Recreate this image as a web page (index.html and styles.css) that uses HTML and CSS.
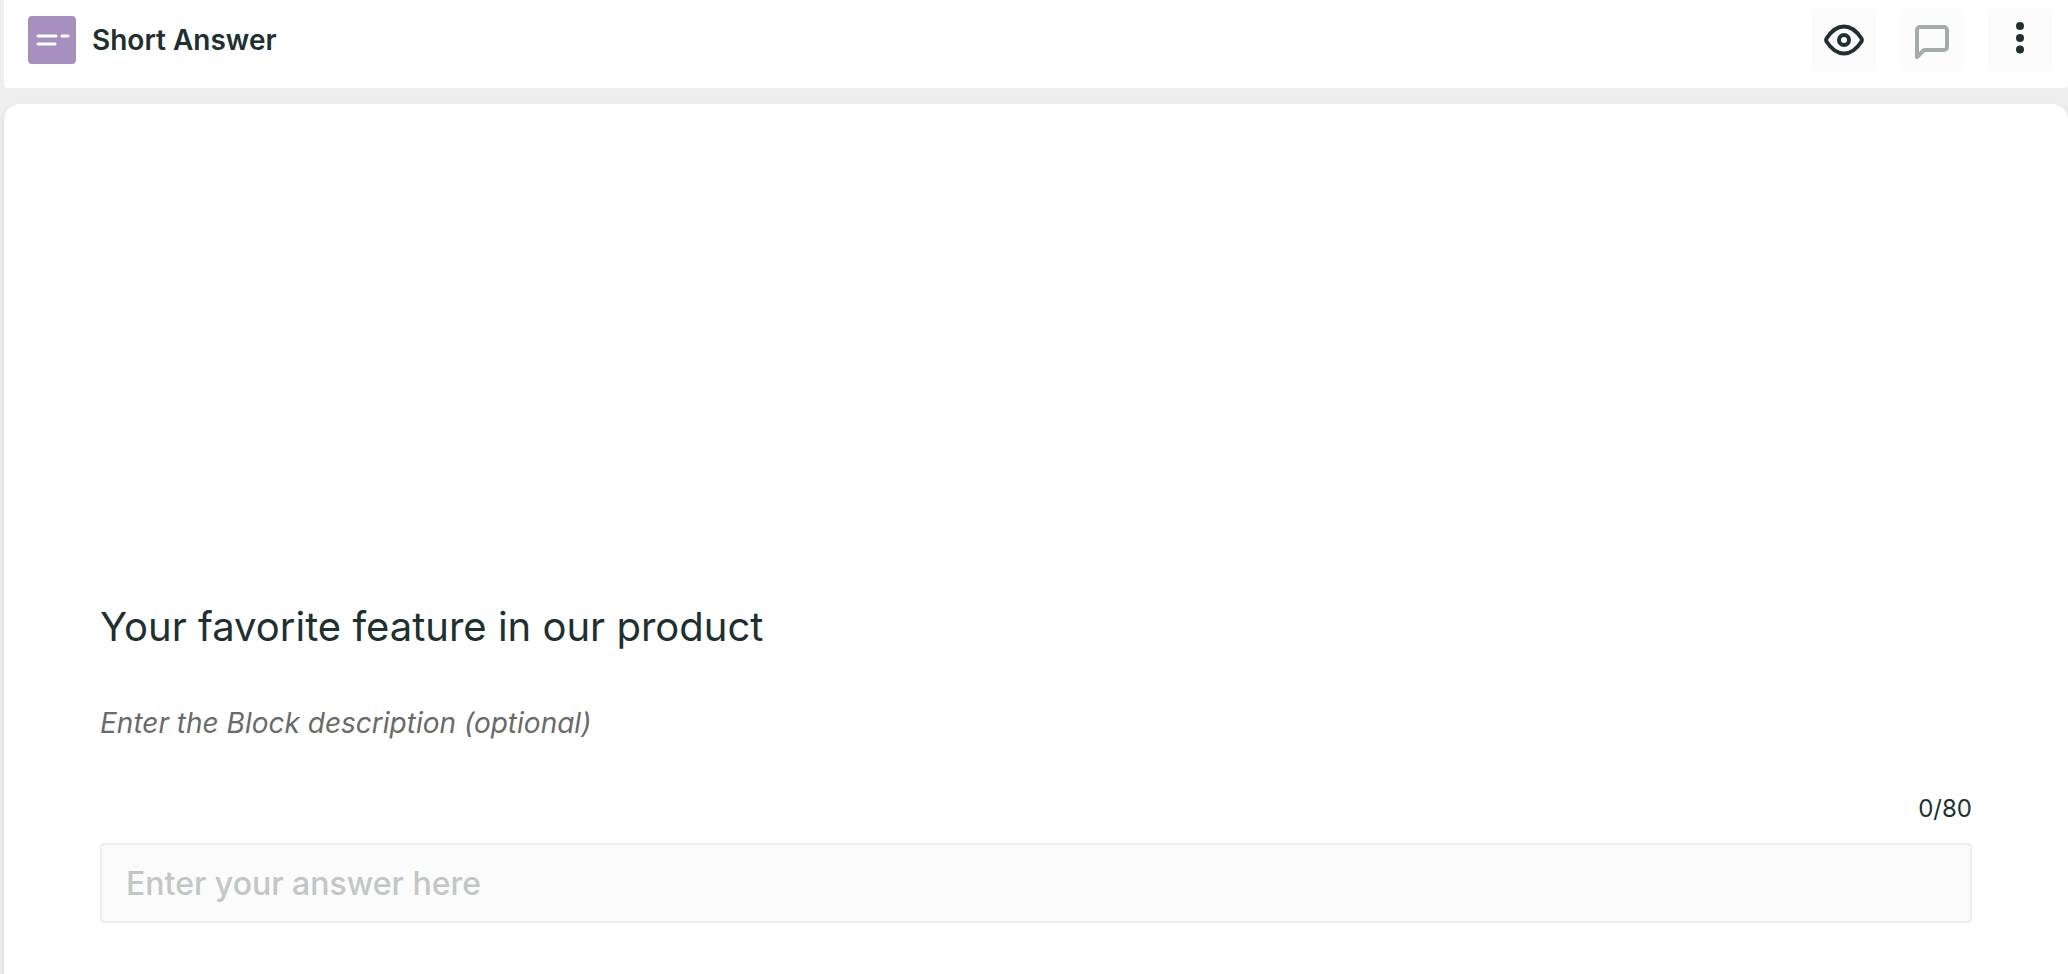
FILE: index.html
```
<!DOCTYPE html>
<html lang="en">
<head>
<meta charset="utf-8">
<title>Short Answer</title>
<link rel="stylesheet" href="styles.css">
</head>
<body>
<header class="toolbar">
  <svg class="block-icon" viewBox="0 0 48 48" aria-hidden="true">
    <rect width="48" height="48" rx="4" fill="#a78fbf"/>
    <path d="M10 20H28M34 20H40M10 28H27" stroke="#fff" stroke-width="3" stroke-linecap="round"/>
  </svg>
  <h1 class="block-name">Short Answer</h1>
  <div class="actions">
    <button class="action" type="button" aria-label="Preview">
      <svg viewBox="0 0 64 64" fill="none" stroke="currentColor" stroke-width="4" stroke-linejoin="round">
        <path d="M14.500 30.500C19 23.500 25 18.500 32 18.500S45 23.500 49.500 30.500Q50.500 32 49.500 33.500C45 40.500 39 45.500 32 45.500S19 40.500 14.500 33.500Q13.500 32 14.500 30.500Z"/>
        <circle cx="32" cy="32" r="5"/>
      </svg>
    </button>
    <button class="action" type="button" aria-label="Comments" disabled>
      <svg viewBox="0 0 64 64" fill="none" stroke="currentColor" stroke-width="4" stroke-linejoin="round">
        <path d="M17 49V22a3 3 0 0 1 3-3H44a3 3 0 0 1 3 3V39a3 3 0 0 1-3 3H24Z"/>
      </svg>
    </button>
    <button class="action" type="button" aria-label="More options">
      <svg viewBox="0 0 64 64" fill="currentColor">
        <circle cx="32" cy="18" r="4"/><circle cx="32" cy="30" r="4"/><circle cx="32" cy="41.500" r="4"/>
      </svg>
    </button>
  </div>
</header>
<main class="panel">
  <h2 class="question">Your favorite feature in our product</h2>
  <p class="description">Enter the Block description (optional)</p>
  <p class="counter" id="count">0/80</p>
  <input class="answer" type="text" maxlength="80" placeholder="Enter your answer here" aria-label="Your answer" aria-describedby="count">
</main>
</body>
</html>
```
FILE: styles.css
```
* {
  box-sizing: border-box;
}

body {
  display: flex;
  flex-direction: column;
  gap: 16px;
  min-height: 100vh;
  margin: 0;
  padding-left: 4px;
  background: #eee;
  color: #203031;
  font-family: Inter, "Liberation Sans", sans-serif;
}

h1,
h2,
p {
  margin: 0;
}

.toolbar {
  display: flex;
  align-items: center;
  padding: 8px 16px 16px 24px;
  border-radius: 0 0 4px 4px;
  background: #fff;
}

.block-icon {
  width: 48px;
  height: 48px;
}

.block-name {
  margin-left: 16px;
  font-size: 28px;
  font-weight: 600;
  line-height: 40px;
}

.actions {
  display: flex;
  gap: 24px;
  margin-left: auto;
}

.action {
  width: 64px;
  height: 64px;
  padding: 0;
  border: 0;
  border-radius: 4px;
  background: #fafafa;
  color: #203031;
}

.action:disabled {
  opacity: 0.4;
}

.action svg {
  display: block;
  width: 64px;
  height: 64px;
}

.panel {
  display: flex;
  flex: 1;
  flex-direction: column;
  padding: 499px 96px 48px;
  border-radius: 16px 16px 0 0;
  background: #fff;
  box-shadow: 0 4px 8px rgba(0, 0, 0, 0.1);
}

.question {
  font-size: 40px;
  font-weight: 400;
  line-height: 48px;
}

.description {
  margin-top: 52px;
  color: #6a6a6a;
  font-size: 28px;
  font-style: italic;
  line-height: 40px;
}

.counter {
  align-self: flex-end;
  margin-top: 50px;
  font-size: 24px;
  line-height: 32px;
}

.answer {
  width: 100%;
  height: 80px;
  margin-top: 18px;
  padding: 0 24px;
  border: 2px solid #eee;
  border-radius: 4px;
  background: #fbfbfb;
  color: #203031;
  font: 500 32px Inter, "Liberation Sans", sans-serif;
}

.answer::placeholder {
  color: #c2c6c6;
  opacity: 1;
}
```
